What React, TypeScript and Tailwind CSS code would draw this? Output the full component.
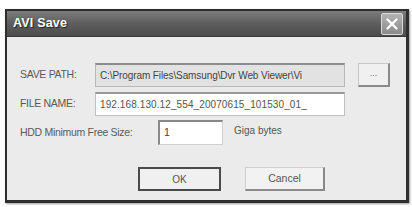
import React from 'react';

export default function App() {
  return (
    <div className="w-[412px] h-[207px] bg-white pt-[9px] pl-[5px]" style={{ fontFamily: '"Liberation Sans", Arial, sans-serif' }}>
      <div className="w-[404px] h-[194px] border-2 border-r-[3px] border-b-[3px] border-[#2e2e2e] bg-[#ebebeb] flex flex-col shadow-[1px_1px_2px_rgba(0,0,0,0.4)]">
        {/* title bar */}
        <div className="h-[26px] flex items-center justify-between pl-[6px] pr-[3px] bg-gradient-to-b from-[#7c7c7c] via-[#5e5e5e] to-[#4c4c4c] border-b border-[#3a3a3a]">
          <span className="text-white font-bold text-[12.5px] tracking-[0.2px] [text-shadow:1px_1px_1px_rgba(0,0,0,0.6)]">AVI Save</span>
          <div className="w-[22px] h-[22px] rounded-[2px] border border-[#d8d8d8] bg-gradient-to-b from-[#b4b4b4] to-[#8a8a8a] flex items-center justify-center">
            <svg width="14" height="14" viewBox="0 0 14 14">
              <path d="M2.5 2.5 L11.5 11.5 M11.5 2.5 L2.5 11.5" stroke="#ffffff" strokeWidth="2.4" strokeLinecap="round" />
            </svg>
          </div>
        </div>

        {/* body */}
        <div className="flex-1 flex flex-col pt-[26px] pl-[13px] text-[10.5px] text-[#5a5a5a]">
          <div className="flex items-center h-[24px]">
            <span className="w-[75px] tracking-[-0.3px]">SAVE PATH:</span>
            <div className="w-[250px] h-[24px] bg-[#e2e2e2] border border-[#b8b8b8] border-t-2 border-t-[#8c8c8c] flex items-center pl-[4px] overflow-hidden whitespace-nowrap text-[10px] text-[#444] tracking-[-0.1px]">
              C:\Program Files\Samsung\Dvr Web Viewer\Vi
            </div>
            <div className="ml-[13px] w-[32px] h-[24px] bg-[#f0f0f0] border border-[#c8c8c8] border-b-2 border-r-2 border-b-[#8a8a8a] border-r-[#8a8a8a] flex items-center justify-center text-[9px] text-[#777] pb-[2px]">
              ...
            </div>
          </div>

          <div className="flex items-center h-[24px] mt-[5px]">
            <span className="w-[75px] tracking-[-0.3px]">FILE NAME:</span>
            <div className="w-[250px] h-[24px] bg-white border border-[#c0c0c0] border-t-2 border-t-[#999] flex items-center pl-[4px] overflow-hidden whitespace-nowrap text-[10px] text-[#555] tracking-[0.1px]">
              192.168.130.12_554_20070615_101530_01_
            </div>
          </div>

          <div className="flex items-start h-[25px] mt-[4px]">
            <span className="w-[138px] self-center tracking-[-0.3px]">HDD Minimum Free Size:</span>
            <div className="w-[65px] h-[25px] bg-white border border-[#d0d0d0] border-t-2 border-l-2 border-t-[#888] border-l-[#888] flex items-center pl-[4px] text-[10.5px] text-[#444]">
              1
            </div>
            <span className="ml-[11px] mt-[3px] text-[10px] text-[#555]">Giga bytes</span>
          </div>

          <div className="flex mt-[22px] pl-[118px] gap-[24px]">
            <div className="w-[83px] h-[24px] border-2 border-[#4a4a4a] bg-[#f0f0f0] flex items-center justify-center text-[10px] text-[#555]">
              OK
            </div>
            <div className="w-[80px] h-[24px] border border-[#d0d0d0] border-b-2 border-r-2 border-b-[#8a8a8a] border-r-[#8a8a8a] bg-[#f2f2f2] flex items-center justify-center text-[10.5px] text-[#555]">
              Cancel
            </div>
          </div>
        </div>
      </div>
    </div>
  );
}
